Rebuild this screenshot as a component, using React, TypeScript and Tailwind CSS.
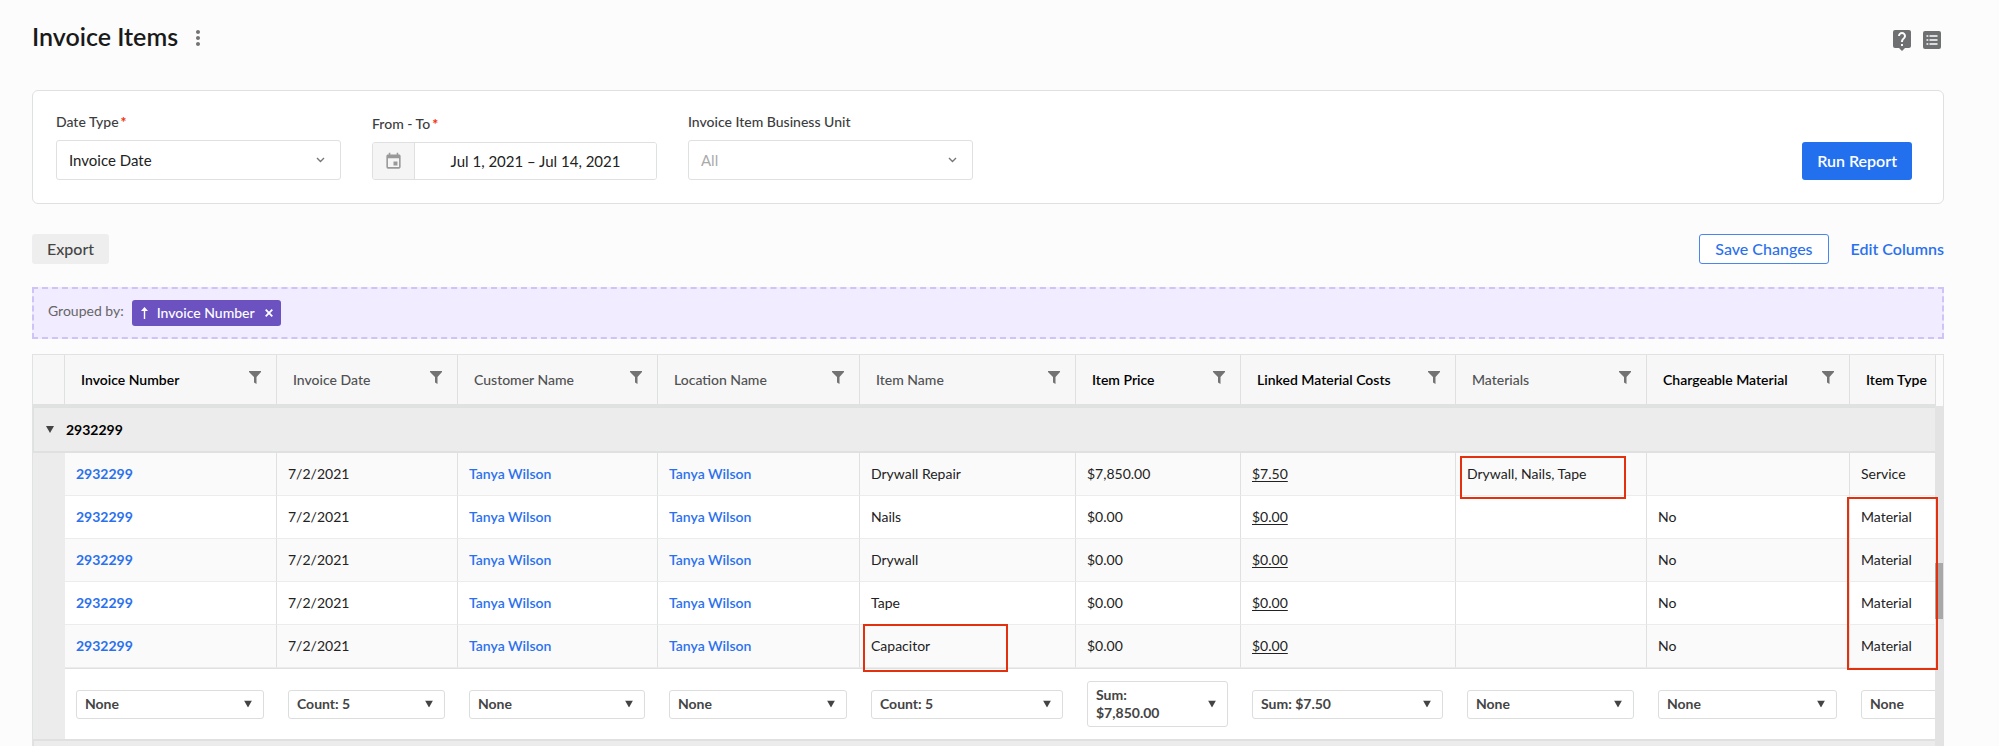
import { ReactNode } from "react";
import { MdEvent, MdLiveHelp, MdMoreVert } from "react-icons/md";

interface Column {
  key: keyof InvoiceItem;
  label: string;
  width: string;
  strong?: boolean;
  total: string;
}

interface InvoiceItem {
  invoiceNumber: string;
  invoiceDate: string;
  customer: string;
  location: string;
  item: string;
  price: string;
  linkedCosts: string;
  materials: string;
  chargeable: string;
  type: string;
}

const COLUMNS: Column[] = [
  { key: "invoiceNumber", label: "Invoice Number", width: "w-[212px]", strong: true, total: "None" },
  { key: "invoiceDate", label: "Invoice Date", width: "w-[181px]", total: "Count: 5" },
  { key: "customer", label: "Customer Name", width: "w-[200px]", total: "None" },
  { key: "location", label: "Location Name", width: "w-[202px]", total: "None" },
  { key: "item", label: "Item Name", width: "w-[216px]", total: "Count: 5" },
  { key: "price", label: "Item Price", width: "w-[165px]", strong: true, total: "Sum: $7,850.00" },
  { key: "linkedCosts", label: "Linked Material Costs", width: "w-[215px]", strong: true, total: "Sum: $7.50" },
  { key: "materials", label: "Materials", width: "w-[191px]", total: "None" },
  { key: "chargeable", label: "Chargeable Material", width: "w-[203px]", strong: true, total: "None" },
  { key: "type", label: "Item Type", width: "w-[180px]", strong: true, total: "None" },
];

const base = { invoiceNumber: "2932299", invoiceDate: "7/2/2021", customer: "Tanya Wilson", location: "Tanya Wilson" };

const ITEMS: InvoiceItem[] = [
  { ...base, item: "Drywall Repair", price: "$7,850.00", linkedCosts: "$7.50", materials: "Drywall, Nails, Tape", chargeable: "", type: "Service" },
  { ...base, item: "Nails", price: "$0.00", linkedCosts: "$0.00", materials: "", chargeable: "No", type: "Material" },
  { ...base, item: "Drywall", price: "$0.00", linkedCosts: "$0.00", materials: "", chargeable: "No", type: "Material" },
  { ...base, item: "Tape", price: "$0.00", linkedCosts: "$0.00", materials: "", chargeable: "No", type: "Material" },
  { ...base, item: "Capacitor", price: "$0.00", linkedCosts: "$0.00", materials: "", chargeable: "No", type: "Material" },
];

function FilterIcon() {
  return (
    <svg width="12" height="13" viewBox="0 0 12 13" fill="#737373" aria-hidden="true">
      <path d="M0 0h12v1L7.500 6v7L5 11.500V6L0 1z" />
    </svg>
  );
}

function ListIcon() {
  return (
    <svg width="24" height="24" viewBox="0 0 24 24" aria-hidden="true">
      <rect x="3" y="3" width="18" height="18" rx="2" fill="#6f7071" />
      <path d="M6.500 8h1.800M6.500 12h1.800M6.500 16h1.800M9.500 8h8M9.500 12h8M9.500 16h8" stroke="#fff" strokeWidth="1.7" />
    </svg>
  );
}

function Chevron() {
  return (
    <svg className="pointer-events-none absolute right-4 top-4" width="9" height="8" viewBox="0 0 9 8" fill="none" stroke="#777" strokeWidth="1.4" aria-hidden="true">
      <path d="M1 2l3.500 3.500L8 2" />
    </svg>
  );
}

function Caret({ className = "" }: { className?: string }) {
  return (
    <svg className={className} width="8" height="7" viewBox="0 0 8 7" fill="#444" aria-hidden="true">
      <path d="M0 0h8L4 7z" />
    </svg>
  );
}

function Label({ htmlFor, required, children }: { htmlFor: string; required?: boolean; children: ReactNode }) {
  return (
    <label htmlFor={htmlFor} className="mb-2 block text-sm leading-5 font-medium text-[#3c3d3e]">
      {children}
      {required && <span className="ml-0.5 font-black text-[#f0310f]">*</span>}
    </label>
  );
}

function TotalSelect({ column }: { column: Column }) {
  const tall = column.total.length > 12;
  return (
    <div className="relative rounded-[3px] border border-[#dcdede] bg-white">
      {/* a native select keeps its value on one line, so long totals are wrapped in a span under it */}
      {tall && <span aria-hidden="true" className="block py-1 pr-9 pl-2 leading-[18px]">{column.total}</span>}
      <select
        aria-label={`${column.label} total`}
        className={tall ? "absolute inset-0 w-full opacity-0" : "block h-[27px] w-full appearance-none bg-transparent pl-2 font-bold"}
      >
        <option>{column.total}</option>
      </select>
      <Caret className="pointer-events-none absolute top-1/2 right-[11px] -translate-y-1/2" />
    </div>
  );
}

function Cell({ column, value }: { column: Column; value: string }) {
  if (column.key === "invoiceNumber") return <a href="#" className="font-bold text-[#2b71ee]">{value}</a>;
  if (column.key === "customer" || column.key === "location") return <a href="#" className="font-semibold text-[#2b71ee]">{value}</a>;
  if (column.key === "linkedCosts") return <a href="#" className="underline underline-offset-2">{value}</a>;
  return <>{value}</>;
}

export default function App() {
  return (
    <div className="flex h-screen flex-col overflow-hidden bg-[#fcfcfc] pr-[55px] pl-8 font-['Lato','Open_Sans',sans-serif] text-[#222]">
      <header className="mb-[38px] flex shrink-0 items-center justify-between pt-5">
        <div className="flex items-center gap-2">
          <h1 className="text-[25px] leading-8 font-semibold text-[#1a1a1a]">Invoice Items</h1>
          <button aria-label="More actions" className="mt-1 text-[#737475]"><MdMoreVert size={24} /></button>
        </div>
        <div className="mt-2 flex gap-1.5 text-[#6f7071]">
          <button aria-label="Help"><MdLiveHelp size={24} /></button>
          <button aria-label="Report list"><ListIcon /></button>
        </div>
      </header>

      <form className="flex shrink-0 items-end gap-[31px] rounded-md border border-[#dfe0e0] bg-white px-[23px] pt-[21px] pb-[23px]">
        <div className="w-[285px]">
          <Label htmlFor="date-type" required>Date Type</Label>
          <div className="relative">
            <select id="date-type" className="h-10 w-full appearance-none rounded-[3px] border border-[#dfe0e0] bg-white pl-3 text-[15px]">
              <option>Invoice Date</option>
            </select>
            <Chevron />
          </div>
        </div>
        <div className="w-[285px]">
          <Label htmlFor="range" required>From - To</Label>
          <div className="flex h-[38px] overflow-hidden rounded-[3px] border border-[#dfe0e0]">
            <span className="flex w-[42px] shrink-0 items-center justify-center border-r border-[#dfe0e0] bg-[#f5f5f5] text-[#999]">
              <MdEvent size={19} />
            </span>
            <input id="range" defaultValue="Jul 1, 2021 – Jul 14, 2021" className="w-full min-w-0 bg-white text-center text-[15px]" />
          </div>
        </div>
        <div className="w-[285px]">
          <Label htmlFor="unit">Invoice Item Business Unit</Label>
          <div className="relative">
            <select id="unit" className="h-10 w-full appearance-none rounded-[3px] border border-[#dfe0e0] bg-white pl-3 text-[15px] text-[#aaa]">
              <option>All</option>
            </select>
            <Chevron />
          </div>
        </div>
        <button type="button" className="mr-2 ml-auto h-[38px] rounded-[3px] bg-[#2270ee] px-[15px] text-base font-semibold text-white">
          Run Report
        </button>
      </form>

      <div className="mt-[30px] flex shrink-0 items-center">
        <button className="h-[30px] rounded-[3px] bg-[#eee] px-[15px] text-base font-medium text-[#444]">Export</button>
        <button className="ml-auto h-[30px] rounded-[3px] border border-[#4a86f0] bg-white px-[15px] text-base font-medium text-[#2b71ee]">Save Changes</button>
        <button className="ml-[22px] text-base font-semibold text-[#2b71ee]">Edit Columns</button>
      </div>

      <div className="mt-[23px] flex h-[52px] shrink-0 items-center border-2 border-dashed border-[#cfc3f7] bg-[#f1ecff] pl-3.5 text-sm">
        <span className="mb-1 text-[#666]">Grouped by:</span>
        <div className="ml-2 flex h-[26px] items-center rounded-[3px] bg-[#6b52c0] px-2 font-medium text-white">
          <svg width="9" height="12" viewBox="0 0 9 12" fill="#fff" aria-hidden="true"><path d="M4.500 0L8 4H5.200v8H3.800V4H1z" /></svg>
          <span className="ml-2">Invoice Number</span>
          <button aria-label="Remove grouping" className="ml-2.5">
            <svg width="8" height="8" viewBox="0 0 8 8" stroke="#fff" strokeWidth="1.8" aria-hidden="true"><path d="M.7.7l6.600 6.600M7.300.7L.7 7.300" /></svg>
          </button>
        </div>
      </div>

      <div className="relative mt-[15px] flex min-h-0 flex-1 border-x border-t border-[#e1e3e3]">
        <div className="min-w-0 flex-1 overflow-hidden">
          <table className="w-max table-fixed border-separate border-spacing-0 text-left text-sm">
            <thead>
              <tr className="bg-[#f7f7f7]">
                <th className="h-[52px] w-8 border-r border-b-3 border-r-[#dfe1e1] border-b-[#e0e2e2]" aria-label="Expand" />
                {COLUMNS.map(c => (
                  <th key={c.key} className={`${c.width} h-[52px] border-r border-b-3 border-r-[#dfe1e1] border-b-[#e0e2e2] pr-[15px] pl-4`}>
                    <div className="flex items-center justify-between">
                      <span className={c.strong ? "font-semibold text-black" : "font-medium text-[#505152]"}>{c.label}</span>
                      <button aria-label={`Filter ${c.label}`} className="mb-1"><FilterIcon /></button>
                    </div>
                  </th>
                ))}
              </tr>
            </thead>
            <tbody>
              <tr>
                <td colSpan={11} className="h-[46px] border-b-2 border-l border-t border-[#dfe1e1] bg-[#ececec] font-bold text-black">
                  <button className="flex items-center pl-3"><Caret /><span className="ml-3">2932299</span></button>
                </td>
              </tr>
              {ITEMS.map((row, i) => (
                <tr key={i} className="odd:bg-white even:bg-[#fafafa]">
                  <td className="h-[43px] bg-[#ececec]" />
                  {COLUMNS.map(c => (
                    <td key={c.key} className="h-[43px] border-r border-b border-r-[#dfe1e1] border-b-[#ececec] px-[11px]">
                      <Cell column={c} value={row[c.key]} />
                    </td>
                  ))}
                </tr>
              ))}
              <tr className="bg-white font-bold text-[#444]">
                <td className="bg-[#ececec]" />
                {COLUMNS.map(c => (
                  <td key={c.key} className="h-[71px] border-t border-[#dfe1e1] pr-[13px] pl-[11px]">
                    <TotalSelect column={c} />
                  </td>
                ))}
              </tr>
              <tr>
                <td colSpan={11} className="h-[47px] border-t-2 border-l border-[#dfe1e1] bg-[#ececec]" />
              </tr>
            </tbody>
          </table>
        </div>

        {/* vertical scroll track */}
        <div className="flex w-2 shrink-0 flex-col">
          <div className="h-[51px] border-l border-[#dfe1e1] bg-[#fbfbfb]" />
          <div className="flex-1 bg-[#e3e3e3] pt-[157px]">
            <div className="h-14 bg-[#a8a8a8]" />
          </div>
        </div>

        {/* highlights */}
        <div className="pointer-events-none absolute top-[101px] left-[1427px] h-[43px] w-[166px] border-2 border-[#e3310f]" />
        <div className="pointer-events-none absolute top-[142px] right-[5px] h-[173px] w-[91px] border-2 border-[#e3310f]" />
        <div className="pointer-events-none absolute top-[269px] left-[830px] h-[48px] w-[145px] border-2 border-[#e3310f]" />
      </div>
    </div>
  );
}
